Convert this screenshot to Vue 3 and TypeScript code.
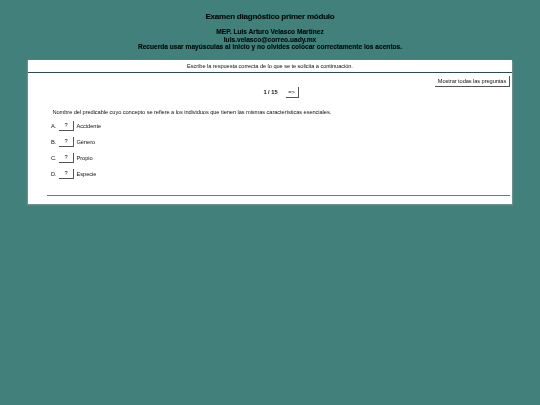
<script setup lang="ts">
const options = [
  { letter: 'A.', text: 'Accidente' },
  { letter: 'B.', text: 'Género' },
  { letter: 'C.', text: 'Propio' },
  { letter: 'D.', text: 'Especie' },
]
</script>

<template>
  <div class="page">
    <header class="head">
      <h1>Examen diagnóstico primer módulo</h1>
      <p>MEP. Luis Arturo Velasco Martínez</p>
      <p>luis.velasco@correo.uady.mx</p>
      <p>Recuerda usar mayúsculas al inicio y no olvides colocar correctamente los acentos.</p>
    </header>
    <main class="card">
      <div class="instruction">Escribe la respuesta correcta de lo que se te solicita a continuación.</div>
      <div class="tools"><button class="btn all">Mostrar todas las preguntas</button></div>
      <div class="pager"><b>1 / 15</b><button class="btn next">=&gt;</button></div>
      <p class="question">Nombre del predicable cuyo concepto se refiere a los individuos que tienen las mismas características esenciales.</p>
      <ul class="options">
        <li v-for="o in options" :key="o.letter">
          <span class="letter">{{ o.letter }}</span>
          <button class="btn answer">?</button>
          <span>{{ o.text }}</span>
        </li>
      </ul>
      <hr class="rule" />
    </main>
  </div>
</template>

<style>
html, body { margin: 0; background: #41807b; }
</style>

<style scoped>
.page {
  width: 540px;
  height: 405px;
  box-sizing: border-box;
  padding-top: 12px;
  background: #41807b;
  font-family: "Liberation Sans", Arial, sans-serif;
  color: #111;
  filter: blur(0.2px);
}
.head { text-align: center; color: #020807; height: 48px; -webkit-text-stroke: 0.1px #020807; }
.head h1 { margin: 0 0 6px; font-size: 8px; line-height: 10px; font-weight: 700; letter-spacing: -0.22px; }
.head p { margin: 0; font-size: 6.6px; line-height: 7.5px; font-weight: 700; }
.card {
  margin: 0 28px;
  height: 144px;
  box-sizing: border-box;
  background: #fff;
  box-shadow: -1px 1px 1px #6f8f8c, 1px 1px 1px #6f8f8c, 0 0 1px #6f8f8c;
  display: flow-root;
}
.instruction {
  height: 12px;
  border-bottom: 1px solid #2f4a48;
  text-align: center;
  font-size: 5.7px;
  letter-spacing: -0.08px;
  line-height: 12px;
  color: #111;
}
.tools { display: flex; justify-content: flex-end; padding: 3px 2px 0 0; height: 10px; }
.btn {
  padding: 0;
  margin: 0;
  background: #fff;
  border: 0;
  border-right: 1px solid #555;
  border-bottom: 1px solid #555;
  font-family: inherit;
  font-size: 5.7px;
  letter-spacing: -0.08px;
  color: #111;
}
.all { width: 75px; height: 11px; }
.pager {
  display: flex;
  justify-content: center;
  align-items: center;
  gap: 8px;
  height: 12px;
  padding-left: 22px;
  font-size: 5.7px;
  color: #111;
}
.next { width: 13px; height: 11px; }
.question { margin: 10.5px 0 0 24.5px; font-size: 5.7px; letter-spacing: -0.08px; line-height: 7px; color: #111; }
.options { list-style: none; margin: 4.5px 0 0 23px; padding: 0; }
.options li {
  display: flex;
  align-items: center;
  height: 11px;
  margin-bottom: 5px;
  font-size: 5.7px;
  letter-spacing: -0.05px;
  color: #111;
}
.letter { width: 8px; }
.answer { width: 15px; height: 10px; margin: 0 2.5px 0 0; }
.rule { margin: 15.5px 2px 0 19px; border: 0; border-top: 1px solid #777; }
</style>
